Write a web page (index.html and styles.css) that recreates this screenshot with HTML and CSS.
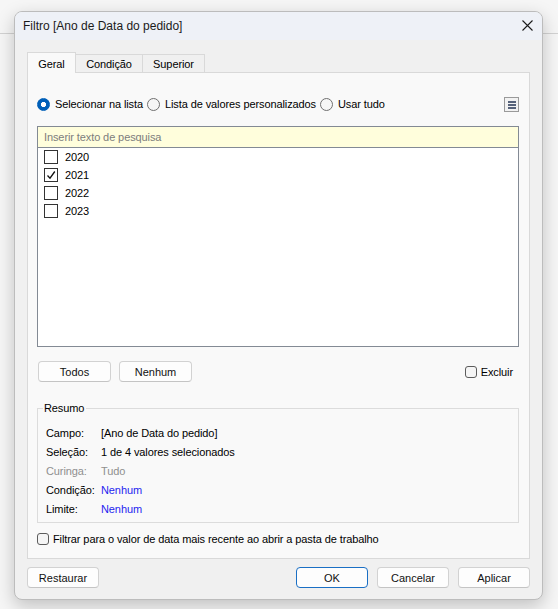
FILE: index.html
```html
<!DOCTYPE html>
<html lang="pt-BR">
<head>
<meta charset="utf-8">
<title>Filtro</title>
<link rel="stylesheet" href="styles.css">
</head>
<body>
<div class="dialog">
  <div class="titlebar">
    <span class="title">Filtro [Ano de Data do pedido]</span>
    <svg class="close" width="11" height="11" viewBox="0 0 11 11"><path d="M0.5 0.5 L10.5 10.5 M10.5 0.5 L0.5 10.5" stroke="#1b1b1b" stroke-width="1.1" fill="none"/></svg>
  </div>
  <div class="content">
    <div class="tabs">
      <div class="tab active tab-geral">Geral</div>
      <div class="tab tab-cond">Condição</div>
      <div class="tab tab-sup">Superior</div>
    </div>
    <div class="panel">
      <div class="choice-row">
        <label class="radio-opt"><span class="radio on"></span>Selecionar na lista</label>
        <label class="radio-opt"><span class="radio"></span>Lista de valores personalizados</label>
        <label class="radio-opt"><span class="radio"></span>Usar tudo</label>
        <svg class="menu-btn" width="15" height="15" viewBox="0 0 15 15">
          <rect x="0.5" y="0.5" width="14" height="14" fill="#f2f2f2" stroke="#9a9a9a"/>
          <rect x="4" y="4" width="8" height="2" fill="#56627a"/>
          <rect x="4" y="7" width="8" height="2" fill="#56627a"/>
          <rect x="4" y="10" width="8" height="2" fill="#56627a"/>
        </svg>
      </div>
      <div class="listbox">
        <div class="search">Inserir texto de pesquisa</div>
        <div class="item"><span class="cb"></span>2020</div>
        <div class="item"><span class="cb"><svg width="12" height="12" viewBox="0 0 12 12"><path d="M2.5 6.5 L5 9.2 L9.8 2.5" stroke="#111" stroke-width="1.3" fill="none"/></svg></span>2021</div>
        <div class="item"><span class="cb"></span>2022</div>
        <div class="item"><span class="cb"></span>2023</div>
      </div>
      <div class="btn-row">
        <button class="btn btn-sel">Todos</button>
        <button class="btn btn-sel">Nenhum</button>
        <label class="check-opt excluir"><span class="wcb"></span>Excluir</label>
      </div>
      <div class="summary">
        <span class="legend">Resumo</span>
        <div class="sum-grid">
          <span>Campo:</span><span>[Ano de Data do pedido]</span>
          <span>Seleção:</span><span>1 de 4 valores selecionados</span>
          <span class="muted">Curinga:</span><span class="muted">Tudo</span>
          <span>Condição:</span><span class="link">Nenhum</span>
          <span>Limite:</span><span class="link">Nenhum</span>
        </div>
      </div>
      <label class="check-opt latest"><span class="wcb"></span>Filtrar para o valor de data mais recente ao abrir a pasta de trabalho</label>
    </div>
    <div class="footer">
      <button class="btn btn-foot">Restaurar</button>
      <button class="btn btn-foot btn-ok">OK</button>
      <button class="btn btn-foot">Cancelar</button>
      <button class="btn btn-foot">Aplicar</button>
    </div>
  </div>
</div>
</body>
</html>
```
FILE: styles.css
```css
* { box-sizing: border-box; }

body {
  margin: 0;
  width: 558px;
  height: 609px;
  overflow: hidden;
  background: #f6f6f6 linear-gradient(#d2d2d2, #d2d2d2) 0 33px / 100% 1px no-repeat;
  font-family: "Liberation Sans", Arial, sans-serif;
  font-size: 11px;
  letter-spacing: -0.1px;
  color: #000;
}

.dialog {
  margin: 11px 0 0 14px;
  width: 529px;
  border: 1px solid #bcbcbc;
  border-radius: 8px;
  background: #f0f0f0;
  box-shadow: 0 6px 18px rgba(0, 0, 0, 0.22);
  overflow: hidden;
}

.titlebar {
  height: 28px;
  background: #eef1f7;
  display: flex;
  align-items: center;
  justify-content: space-between;
  padding: 0 9px 1px 8px;
}

.title {
  font-size: 12px;
  letter-spacing: 0;
  color: #1a1a1a;
}

.content {
  padding: 12px 12px 11px 12px;
}

.tabs {
  display: flex;
  align-items: flex-end;
  height: 20px;
}

.tab {
  height: 18px;
  border: 1px solid #d9d9d9;
  border-bottom: none;
  border-left: none;
  background: #f0f0f0;
  display: flex;
  align-items: center;
  justify-content: center;
  padding-top: 1px;
}

.tab.active {
  height: 21px;
  margin-bottom: -1px;
  border-left: 1px solid #d9d9d9;
  background: #f9f9f9;
  position: relative;
  z-index: 1;
}

.tab-geral { width: 49px; }
.tab-cond { width: 67px; }
.tab-sup { width: 62px; }

.panel {
  background: #f9f9f9;
  border: 1px solid #d9d9d9;
  padding: 23px 10px 11px 9px;
}

.choice-row {
  display: flex;
  align-items: center;
  height: 16px;
}

.radio-opt {
  display: flex;
  align-items: center;
  gap: 5px;
  margin-right: 4px;
}

.radio {
  width: 13px;
  height: 13px;
  border-radius: 50%;
  border: 1px solid #707070;
  background: #f6f6f6;
}

.radio.on {
  border-color: #005fb8;
  background: radial-gradient(circle, #fff 0 2.3px, #005fb8 2.9px);
}

.menu-btn {
  margin-left: auto;
  display: block;
}

.listbox {
  margin-top: 14px;
  height: 221px;
  border: 1px solid #838a94;
  background: #fff;
}

.search {
  height: 21px;
  background: #fffedc;
  border-bottom: 1px solid #838a94;
  padding-left: 6px;
  line-height: 20px;
  color: #7d7d7d;
}

.item {
  height: 18px;
  display: flex;
  align-items: center;
  gap: 7px;
  padding-left: 6px;
}

.cb {
  width: 14px;
  height: 14px;
  border: 1px solid #333;
  background: #fff;
  display: flex;
  align-items: center;
  justify-content: center;
}

.cb svg { display: block; }

.btn-row {
  margin-top: 14px;
  display: flex;
  align-items: center;
  gap: 8px;
  padding-left: 1px;
}

.btn {
  height: 21px;
  border: 1px solid #d2d2d2;
  border-bottom-color: #c4c4c4;
  border-radius: 4px;
  background: #fdfdfd;
  font: inherit;
  color: #111;
  padding: 0;
  display: flex;
  align-items: center;
  justify-content: center;
}

.btn-sel { width: 73px; }

.check-opt {
  display: flex;
  align-items: center;
  gap: 4px;
}

.wcb {
  width: 12px;
  height: 12px;
  border: 1px solid #5c5c5c;
  border-radius: 3px;
  background: #f5f5f5;
}

.excluir {
  margin-left: auto;
  margin-right: 6px;
}

.summary {
  margin-top: 26px;
  position: relative;
  border: 1px solid #dcdcdc;
  padding: 14px 0 4px 8px;
}

.legend {
  position: absolute;
  top: -8px;
  left: 5px;
  padding: 0 2px 0 1px;
  line-height: 15px;
  background: #f9f9f9;
}

.sum-grid {
  display: grid;
  grid-template-columns: 55px auto;
  grid-auto-rows: 19px;
  align-items: center;
}

.muted { color: #8f8f8f; }
.link { color: #1f1ff0; }

.latest {
  margin-top: 8px;
  height: 16px;
}

.footer {
  margin-top: 8px;
  display: flex;
  gap: 9px;
}

.btn-foot { width: 72px; }

.btn-foot:first-child { margin-right: auto; }

.btn-ok {
  border-color: #1a6fc4;
}
```
